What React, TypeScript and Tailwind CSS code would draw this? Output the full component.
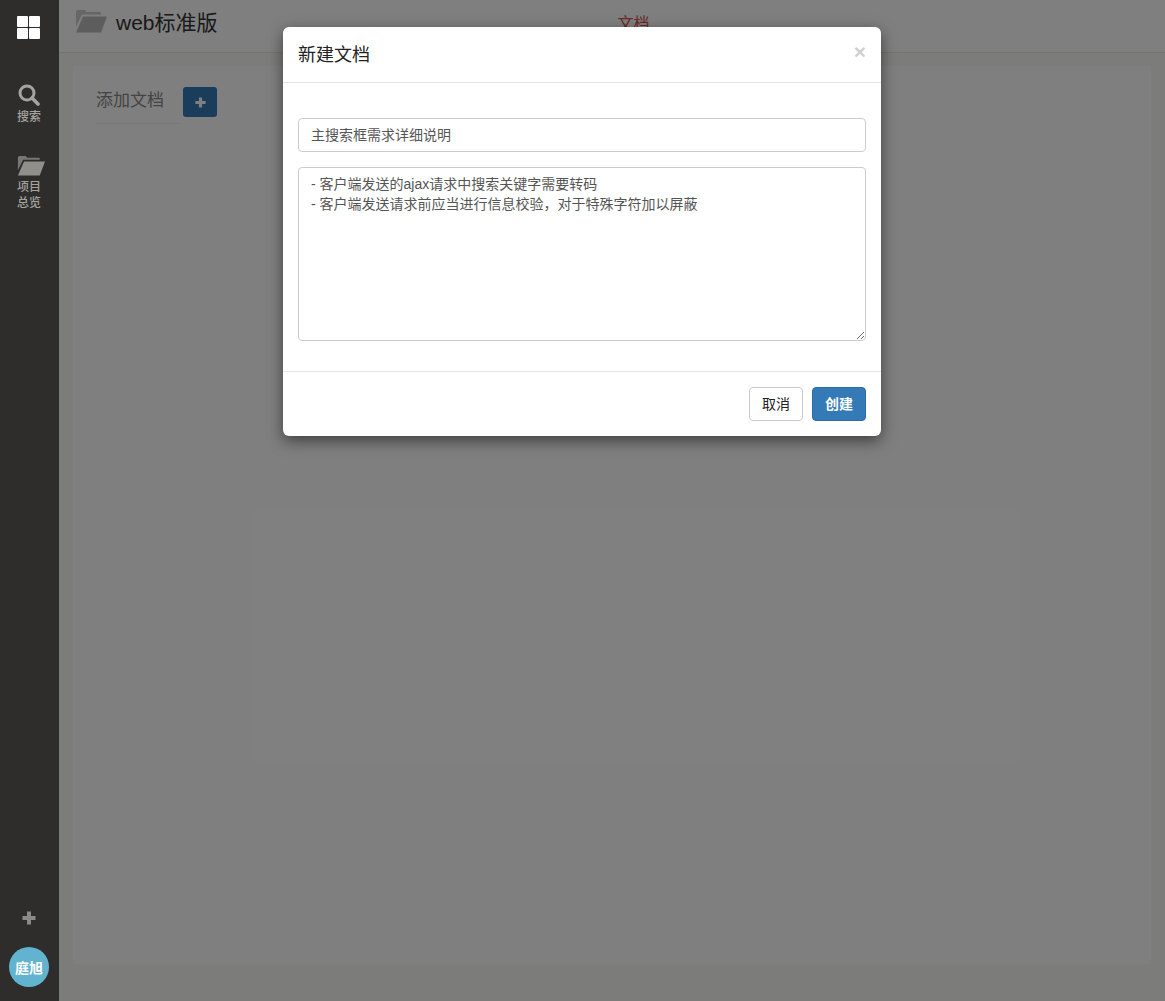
import React from 'react';

const FONT = "font-['Liberation_Sans','Noto_Sans_CJK_SC',sans-serif]";

const FolderOpen = ({ className }: { className: string }) => (
  <svg viewBox="0 0 32 23" className={className} fill="currentColor">
    <path d="M1 2.5Q1 0.5 3 0.5h7l1.5 2H25Q26 2.5 26 4v1H7L1 17z" opacity="0.75" />
    <path d="M8 7h24L26 23H1z" />
  </svg>
);

const PlusGlyph = ({ className }: { className: string }) => (
  <svg viewBox="0 0 14 14" className={className} fill="currentColor">
    <path d="M5 0.5h4V5h4.5v4H9v4.5H5V9H0.5V5H5z" />
  </svg>
);

const SearchGlyph = ({ className }: { className: string }) => (
  <svg viewBox="0 0 22 22" className={className} fill="none" stroke="currentColor">
    <circle cx="9" cy="9" r="7" strokeWidth="3" />
    <path d="M14 14l6 6" strokeWidth="3.6" strokeLinecap="round" />
  </svg>
);

const Sidebar = () => (
  <aside className="relative z-20 flex h-full w-[59px] shrink-0 flex-col items-center bg-[#2e2d2b] border-r border-[#26302c]">
    <div className="-ml-[2px] mt-[16px] grid grid-cols-2 gap-[1px]">
      <div className="h-[11px] w-[11px] rounded-[1px] bg-white" />
      <div className="h-[11px] w-[11px] rounded-[1px] bg-white" />
      <div className="h-[11px] w-[11px] rounded-[1px] bg-white" />
      <div className="h-[11px] w-[11px] rounded-[1px] bg-white" />
    </div>

    <div className="mt-[45px] flex flex-col items-center text-[#a3a3a0]">
      <SearchGlyph className="h-[22px] w-[22px]" />
      <span className="mt-[3px] text-[12px] font-medium leading-[16px]">搜索</span>
    </div>

    <div className="mt-[30px] flex flex-col items-center text-[#a3a3a0]">
      <FolderOpen className="ml-[3px] h-[21px] w-[28px] text-[#8f8f8b]" />
      <span className="mt-[3px] w-[24px] text-center text-[12px] font-medium leading-[16px]">项目总览</span>
    </div>

    <div className="mt-auto flex flex-col items-center">
      <PlusGlyph className="h-[14px] w-[14px] text-[#8a8a87]" />
      <div className="mb-[14px] mt-[22px] flex h-[40px] w-[40px] items-center justify-center rounded-full bg-[#62b3d0] pt-[2px] text-[14px] font-bold text-white">
        庭旭
      </div>
    </div>
  </aside>
);

export default function App() {
  return (
    <div className={`${FONT} relative flex h-[1001px] w-full overflow-hidden bg-[#f8f8f6] text-[#333]`}>
      <Sidebar />

      <main className="flex min-w-0 flex-1 flex-col">
        <header className="relative flex h-[53px] shrink-0 items-start border-b border-[#ece9e2] bg-white pl-[16px]">
          <FolderOpen className="mt-[9px] h-[24px] w-[32px] text-[#bbb]" />
          <span className="ml-[9px] mt-[7px] text-[21px] leading-[32px] text-[#333]">web标准版</span>
          <span className="ml-[400px] mt-[13px] text-[16px] leading-[22px] text-[#d9534f]">文档</span>
        </header>
        <section className="mx-[14px] mb-[37px] mt-[13px] flex-1 bg-white px-[23px] pt-[21px]">
          <div className="flex items-center">
            <span className="-mt-[2px] w-[87px] text-[17px] leading-[26px] text-[#888]">添加文档</span>
            <button className="flex h-[30px] w-[34px] items-center justify-center rounded-[3px] bg-[#337ab7] text-white">
              <PlusGlyph className="h-[11px] w-[11px]" />
            </button>
          </div>
          <div className="mt-[6px] h-px w-[84px] bg-[#f2f2f2]" />
        </section>
      </main>

      {/* backdrop + modal */}
      <div className="absolute inset-0 z-10 bg-black/50" />
      <div className="absolute left-[283px] top-[27px] z-30 w-[598px] rounded-[6px] bg-white shadow-[0_5px_15px_rgba(0,0,0,0.5)]">
        <div className="flex h-[56px] items-center justify-between border-b border-[#e5e5e5] px-[15px]">
          <h4 className="text-[18px] font-normal leading-[26px] text-[#222]">新建文档</h4>
          <span className="-mt-[6px] text-[21px] font-bold leading-none text-[#cfcfcf]">×</span>
        </div>
        <div className="flex flex-col gap-[15px] px-[15px] pb-[30px] pt-[35px]">
          <input
            readOnly
            value="主搜索框需求详细说明"
            className="h-[34px] w-full rounded-[4px] border border-[#ccc] px-[12px] pb-[2px] text-[14px] text-[#555] outline-none"
          />
          <textarea
            readOnly
            rows={8}
            value={'- 客户端发送的ajax请求中搜索关键字需要转码\n- 客户端发送请求前应当进行信息校验，对于特殊字符加以屏蔽'}
            className="block h-[174px] w-full rounded-[4px] border border-[#ccc] px-[12px] py-[6px] text-[14px] leading-[20px] text-[#555] outline-none"
          />
        </div>
        <div className="flex justify-end gap-[9px] border-t border-[#e5e5e5] p-[15px]">
          <button className="h-[34px] w-[54px] rounded-[4px] border border-[#ccc] bg-white text-[14px] font-normal text-[#222]">取消</button>
          <button className="h-[34px] w-[54px] rounded-[4px] border border-[#2e6da4] bg-[#337ab7] text-[14px] font-bold text-white">创建</button>
        </div>
      </div>
    </div>
  );
}
